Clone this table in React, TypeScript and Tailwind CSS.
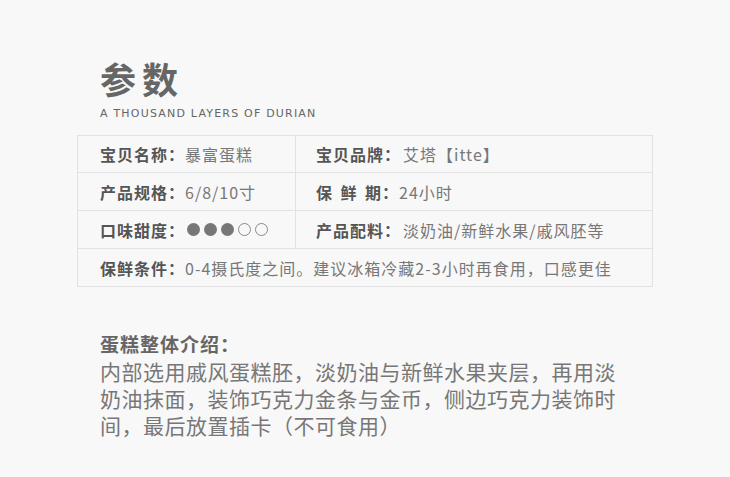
const cjk = { fontFamily: '"Noto Sans CJK SC", "Noto Sans", sans-serif' };

function Label({ children }: { children: React.ReactNode }) {
  return <span className="font-bold text-[#555]">{children}</span>;
}

function Dots() {
  return (
    <span className="inline-flex items-center gap-[4px] ml-[2px]">
      <span className="w-[13px] h-[13px] rounded-full bg-[#777]" />
      <span className="w-[13px] h-[13px] rounded-full bg-[#777]" />
      <span className="w-[13px] h-[13px] rounded-full bg-[#777]" />
      <span className="w-[13px] h-[13px] rounded-full border-[1.5px] border-[#888]" />
      <span className="w-[13px] h-[13px] rounded-full border-[1.5px] border-[#888]" />
    </span>
  );
}

export default function App() {
  return (
    <div className="w-[730px] h-[477px] bg-[#f8f8f8] text-[#777] overflow-hidden" style={cjk}>
      <div className="pt-[56px] pl-[100px]">
        <h1 className="text-[36px] leading-[44px] font-bold tracking-[6px] text-[#666]">参数</h1>
        <p
          className="mt-[7px] text-[11px] leading-[14px] tracking-[1.2px] text-[#666]"
          style={{ fontFamily: '"DejaVu Sans", sans-serif' }}
        >
          A THOUSAND LAYERS OF DURIAN
        </p>
      </div>

      <div className="ml-[77px] mt-[14px] w-[576px] border border-[#e2e2e2] text-[16px] tracking-[1px]">
        <div className="grid grid-cols-[218px_1fr] h-[37px] border-b border-[#e2e2e2]">
          <div className="pl-[22px] flex items-center border-r border-[#e2e2e2]">
            <Label>宝贝名称：</Label>暴富蛋糕
          </div>
          <div className="pl-[20px] flex items-center">
            <Label>宝贝品牌：</Label>
            <span className="ml-[2px]">艾塔【itte】</span>
          </div>
        </div>
        <div className="grid grid-cols-[218px_1fr] h-[38px] border-b border-[#e2e2e2]">
          <div className="pl-[22px] flex items-center border-r border-[#e2e2e2]">
            <Label>产品规格：</Label>6/8/10寸
          </div>
          <div className="pl-[20px] flex items-center">
            <span className="font-bold text-[#555] inline-flex">
              <span className="inline-flex justify-between w-[66px]">
                <span>保</span>
                <span>鲜</span>
                <span>期</span>
              </span>
              <span>：</span>
            </span>
            24小时
          </div>
        </div>
        <div className="grid grid-cols-[218px_1fr] h-[38px] border-b border-[#e2e2e2]">
          <div className="pl-[22px] flex items-center border-r border-[#e2e2e2]">
            <Label>口味甜度：</Label>
            <Dots />
          </div>
          <div className="pl-[20px] flex items-center">
            <Label>产品配料：</Label>
            <span className="ml-[2px]">淡奶油/新鲜水果/戚风胚等</span>
          </div>
        </div>
        <div className="h-[37px] pl-[22px] flex items-center">
          <Label>保鲜条件：</Label>0-4摄氏度之间。建议冰箱冷藏2-3小时再食用，口感更佳
        </div>
      </div>

      <div className="pl-[100px] mt-[44px]">
        <h2 className="text-[19px] leading-[26px] font-bold tracking-[1px] text-[#666]">蛋糕整体介绍：</h2>
        <p className="mt-[1px] w-[528px] text-[21px] leading-[27px] tracking-[0.5px] text-[#777]">
          内部选用戚风蛋糕胚，淡奶油与新鲜水果夹层，再用淡奶油抹面，装饰巧克力金条与金币，侧边巧克力装饰时间，最后放置插卡（不可食用）
        </p>
      </div>
    </div>
  );
}
